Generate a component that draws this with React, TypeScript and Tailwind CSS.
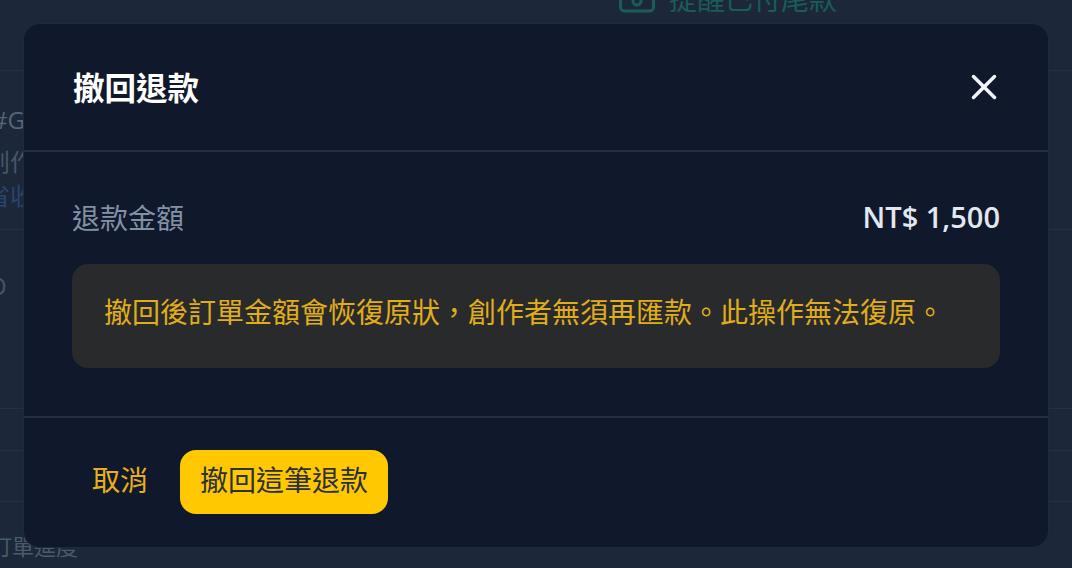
import { X } from 'lucide-react';

const FONT = "font-['Noto_Sans_CJK_TC','Open_Sans',sans-serif]";

// dimmed order page sitting behind the dialog
function BackgroundPage() {
  return (
    <div className="h-[568px] overflow-hidden bg-[#1c2839]">
      <div className="flex h-[71px] items-start justify-end border-b border-[#243145] pr-[235px]">
        <div className="-mt-[17px] flex items-center gap-[14px]">
          <svg width="36" height="30" viewBox="0 0 36 30" fill="none" stroke="#1a5c57" strokeWidth="3">
            <rect x="1.5" y="-6" width="33" height="34" rx="4" />
            <circle cx="18" cy="18" r="4" />
          </svg>
          <span className="text-[28px] leading-[28px] text-[#1a5c57]">提醒已付尾款</span>
        </div>
      </div>
      <div className="h-[159px] border-b border-[#243145] pt-[33px]">
        <div className="-ml-[8px] font-['Open_Sans'] text-[24px] leading-[32px] text-[#55647a]">#G</div>
        <div className="-ml-[14px] mt-[10px] text-[24px] leading-[30px] text-[#475569]">創作</div>
        <div className="-ml-[14px] mt-[4px] text-[24px] leading-[30px] text-[#2b4470]">省收</div>
      </div>
      <div className="h-[179px] border-b border-[#243145] pt-[42px]">
        <div className="-ml-[12px] font-['Open_Sans'] text-[24px] leading-[28px] text-[#475569]">O</div>
      </div>
      <div className="h-[42px] border-b border-[#243145]" />
      <div className="h-[51px] border-b border-[#243145]" />
      <div className="-ml-[10px] mt-[29px] text-[22px] leading-[28px] text-[#4a5a70]">訂單進度</div>
    </div>
  );
}

export default function App() {
  return (
    <div lang="zh-Hant" className={`relative h-[568px] w-[1072px] overflow-hidden ${FONT}`}>
      <BackgroundPage />
      <div className="absolute top-[24px] left-[24px] flex h-[523px] w-[1024px] flex-col rounded-[16px] bg-[#10192b] shadow-[0_0_0_1px_#1f2a3c]">
        <div className="flex h-[128px] items-center justify-between border-b-2 border-[#232e41] pr-[43px] pl-[49px]">
          <h2 className="pb-[3px] text-[31.5px] leading-[40px] font-bold text-white">撤回退款</h2>
          <X size={42} strokeWidth={2} className="text-[#f1f5f9]" />
        </div>
        <div className="flex h-[266px] flex-col border-b-2 border-[#232e41] px-[48px] pt-[45px]">
          <div className="flex h-[40px] items-center justify-between">
            <span className="text-[28px] leading-[40px] text-[#8391a6]">退款金額</span>
            <span className="font-['Open_Sans'] text-[29px] leading-[40px] font-semibold text-[#e2e8f0]">NT$ 1,500</span>
          </div>
          <div className="mt-[27px] flex h-[104px] items-start rounded-[16px] bg-[#292a2b] px-[32px] pt-[26px]">
            <p className="text-[28px] leading-[42px] text-[#e0ad1b]">
              撤回後訂單金額會恢復原狀，創作者無須再匯款。此操作無法復原。
            </p>
          </div>
        </div>
        <div className="flex flex-1 items-start gap-[12px] px-[48px] pt-[32px]">
          <button className="h-[64px] px-[20px] pb-[6px] text-[28px] text-[#e9ae1f]">取消</button>
          <button className="h-[64px] rounded-[16px] bg-[#ffc800] px-[20px] pb-[6px] text-[28px] text-[#2b303a]">撤回這筆退款</button>
        </div>
      </div>
    </div>
  );
}
